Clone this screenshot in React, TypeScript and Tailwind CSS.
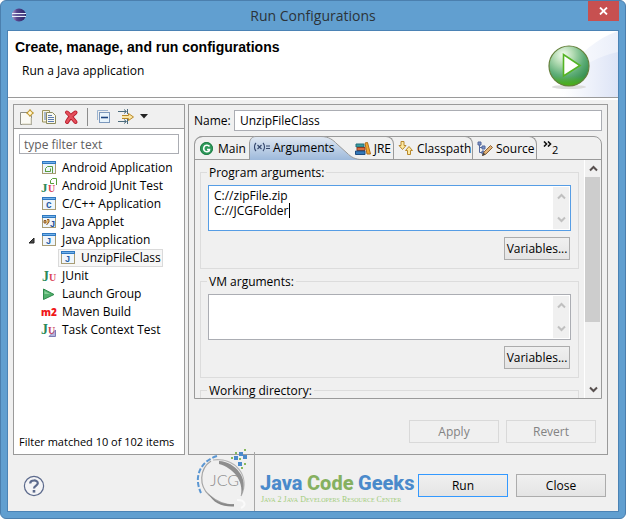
import { useState } from "react";
import type { ReactNode } from "react";

type IconName =
    | "android"
    | "androidTest"
    | "cpp"
    | "applet"
    | "java"
    | "junit"
    | "launch"
    | "maven"
    | "taskTest";

interface TreeItem {
    label: string;
    icon: IconName;
    children?: TreeItem[];
}

const treeItems: TreeItem[] = [
    { label: "Android Application", icon: "android" },
    { label: "Android JUnit Test", icon: "androidTest" },
    { label: "C/C++ Application", icon: "cpp" },
    { label: "Java Applet", icon: "applet" },
    { label: "Java Application", icon: "java", children: [{ label: "UnzipFileClass", icon: "java" }] },
    { label: "JUnit", icon: "junit" },
    { label: "Launch Group", icon: "launch" },
    { label: "Maven Build", icon: "maven" },
    { label: "Task Context Test", icon: "taskTest" },
];

const Icon = ({ children }: { children: ReactNode }) => (
    <svg width="16" height="16" viewBox="0 0 16 16" className="block shrink-0" aria-hidden="true">
        {children}
    </svg>
)

const WindowFrame = () => (
    <>
        <rect x="1.5" y="1.5" width="13" height="12" fill="#eef6fd" stroke="#a89c74" />
        <rect x="1" y="1" width="14" height="3" fill="#2f78c0" />
        <rect x="2" y="2" width="12" height="1" fill="#72b2ea" />
    </>
)

const JUnitLetters = () => (
    <>
        <text x="1" y="13" fontSize="14" fontWeight="700" fontFamily="Liberation Serif, serif" fill="#2c8a5a">J</text>
        <text x="8" y="13" fontSize="10" fontWeight="700" fontFamily="Liberation Serif, serif" fill="#dc4458">U</text>
    </>
)

const TreeIcon = ({ name }: { name: IconName }) => {
    switch (name) {
        case "android":
            return (
                <Icon>
                    <WindowFrame />
                    <path d="M4.500 12V8.500L6.500 6.500H11.500V13M4.500 11.500H9.500V8.500" fill="none" stroke="#5a9e3c" />
                </Icon>
            )
        case "androidTest":
            return (
                <Icon>
                    <text x="0" y="14" fontSize="13" fontWeight="700" fontFamily="Liberation Serif, serif" fill="#2c8a5a">J</text>
                    <text x="7" y="14" fontSize="10" fontWeight="700" fontFamily="Liberation Serif, serif" fill="#dc4458">U</text>
                    <path d="M9.500 5.500V2.500L11.500 0.500H15.500V7M9.500 5.500H13" fill="none" stroke="#5a9e3c" />
                </Icon>
            )
        case "cpp":
            return (
                <Icon>
                    <WindowFrame />
                    <text x="5" y="12" fontSize="10" fontWeight="700" fontFamily="Liberation Sans, sans-serif" fill="#2b5ea4">c</text>
                </Icon>
            )
        case "applet":
            return (
                <Icon>
                    <WindowFrame />
                    <path d="M3 6.500H5V9H3ZM6 5.500H8V8L5.500 11" fill="#e8b860" stroke="#8c5a2a" />
                    <text x="9" y="13" fontSize="9" fontWeight="700" fontFamily="Liberation Sans, sans-serif" fill="#1f4f98">J</text>
                </Icon>
            )
        case "java":
            return (
                <Icon>
                    <WindowFrame />
                    <text x="5" y="12" fontSize="9" fontWeight="700" fontFamily="Liberation Sans, sans-serif" fill="#1f5fa8">J</text>
                </Icon>
            )
        case "junit":
            return (
                <Icon>
                    <JUnitLetters />
                </Icon>
            )
        case "launch":
            return (
                <Icon>
                    <path d="M2.500 3 13 8.500 2.500 13.500Z" fill="#52b06c" stroke="#2f8a4c" />
                    <path d="M3.500 5 9 8H3.500Z" fill="#8ad09a" />
                </Icon>
            )
        case "maven":
            return (
                <Icon>
                    <text x="0" y="12" fontSize="10" fontWeight="800" fontFamily="Open Sans, sans-serif" fill="#f01818">m2</text>
                </Icon>
            )
        case "taskTest":
            return (
                <Icon>
                    <path d="M14.500 8V14.500H8Z" fill="#b4b4dc" stroke="#7c7cb4" />
                    <text x="0" y="12" fontSize="14" fontWeight="700" fontFamily="Liberation Serif, serif" fill="#2c8a5a">J</text>
                    <text x="7" y="12" fontSize="10" fontWeight="700" fontFamily="Liberation Serif, serif" fill="#c8445c">U</text>
                </Icon>
            )
    }
}

const EclipseLogo = () => (
    <svg width="16" height="16" viewBox="0 0 16 16" className="block" aria-hidden="true">
        <defs>
            <linearGradient id="eclipse" x1="0" x2="1">
                <stop offset="0" stopColor="#b79ac8" />
                <stop offset="0.35" stopColor="#54448c" />
                <stop offset="1" stopColor="#2a2466" />
            </linearGradient>
        </defs>
        <ellipse cx="8" cy="8" rx="7" ry="6.500" fill="url(#eclipse)" />
        <path d="M1 6.500H15M1 9.500H15" stroke="#e6eefa" />
        <path d="M2 8H14" stroke="#6f6ca8" />
    </svg>
)

const RunBadge = () => (
    <svg width="46" height="46" viewBox="0 0 46 46" className="block" aria-hidden="true">
        <defs>
            <radialGradient id="ball" cx="0.36" cy="0.22" r="0.8">
                <stop offset="0" stopColor="#f4fbf0" />
                <stop offset="0.3" stopColor="#b4dcb4" />
                <stop offset="0.65" stopColor="#5fae78" />
                <stop offset="1" stopColor="#2f8a4a" />
            </radialGradient>
            <linearGradient id="glow" x1="0" y1="0" x2="0" y2="1">
                <stop offset="0.75" stopColor="#5cc018" stopOpacity="0" />
                <stop offset="1" stopColor="#4cb010" />
            </linearGradient>
        </defs>
        <ellipse cx="23" cy="43" rx="17" ry="2" fill="#dcdcdc" />
        <circle cx="23" cy="22" r="20" fill="url(#ball)" />
        <circle cx="23" cy="22" r="20" fill="url(#glow)" stroke="#66803c" strokeWidth="1.2" />
        <path d="M17.500 10.500V32L34 21.500Z" fill="#fff" stroke="#54b424" strokeWidth="1.6" />
    </svg>
)

const HeaderWave = () => (
    <svg width="70" height="66" viewBox="0 0 70 66" className="absolute right-0 top-0" aria-hidden="true">
        <defs>
            <linearGradient id="wave" x1="0" x2="1">
                <stop offset="0" stopColor="#fff" />
                <stop offset="1" stopColor="#dde4f6" />
            </linearGradient>
        </defs>
        <path d="M70 0C48 8 32 22 20 40L10 66H70Z" fill="url(#wave)" opacity="0.6" />
        <path d="M70 21C50 25 36 34 22 46L14 66H70Z" fill="url(#wave)" />
    </svg>
)

const Arrow = ({ down = false, faint = false }: { down?: boolean; faint?: boolean }) => (
    <svg width="9" height="7" viewBox="0 0 9 7" className="block" aria-hidden="true">
        <path
            d={down ? "M1 1.500 4.500 5 8 1.500" : "M1 5.500 4.500 2 8 5.500"}
            fill="none"
            stroke={faint ? "#c0c0c0" : "#58504f"}
            strokeWidth="2"
        />
    </svg>
)

const Toolbar = () => (
    <div className="flex h-[24px] items-center border-b border-[#9a9a9a] bg-[#f0f0f0] pl-[5px]">
        <button type="button" aria-label="New launch configuration" className="mr-[6px]">
            <Icon>
                <path d="M1.500 3.500H10L12.500 7V15.500H1.500Z" fill="#fbfaf4" stroke="#8f8f86" />
                <path d="M3 15H12V9" fill="none" stroke="#d8d4bc" />
                <path d="M11 0.500 12.500 2.500 14.500 4 12.500 5.500 11 7.500 9.500 5.500 7.500 4 9.500 2.500Z" fill="#f6d878" stroke="#b08820" />
                <path d="M11 2.500V5.500M9.500 4H12.500" stroke="#fff" />
            </Icon>
        </button>
        <button type="button" aria-label="Duplicate" className="mr-[6px]">
            <Icon>
                <path d="M1.500 1.500H8.500V13H1.500Z" fill="#f6f4e4" stroke="#9c945c" />
                <path d="M5.500 3.500H11.500L14.500 6.500V14.500H5.500Z" fill="#f8f8f0" stroke="#8c8a5c" />
                <path d="M3 4H5M3 6H5M3 8H5M3 10H5M7 6.500H11M7 8.500H13M7 10.500H13M7 12.500H13" stroke="#5c7cb0" />
            </Icon>
        </button>
        <button type="button" aria-label="Delete" className="mr-[8px]">
            <Icon>
                <path d="M4 3.500C6 5 9 9 12.500 13M12.500 3.500C9 6 6 9 4 13" stroke="#b81c2c" strokeWidth="4" strokeLinecap="round" />
                <path d="M4 3.500C6 5 9 9 12.500 13M12.500 3.500C9 6 6 9 4 13" stroke="#e4505c" strokeWidth="2.2" strokeLinecap="round" />
            </Icon>
        </button>
        <div className="mr-[8px] h-[18px] w-px bg-[#8c8c8c]" />
        <button type="button" aria-label="Collapse all" className="mr-[6px]">
            <Icon>
                <path d="M1.500 11V1.500H12" fill="none" stroke="#9cb4d0" />
                <rect x="3.500" y="3.500" width="10" height="10" fill="#e8f4fc" stroke="#7c98bc" />
                <path d="M5 8.500H12" stroke="#1c4480" strokeWidth="1.600" />
            </Icon>
        </button>
        <button type="button" aria-label="Filter launch configurations" className="flex items-center gap-[6px]">
            <Icon>
                <path d="M0 2.500H8M0 12.500H8" stroke="#4c6c7c" />
                <path d="M6 0.500 8.500 2.500 6 4.500M6 10.500 8.500 12.500 6 14.500M9.500 0V5M9.500 10V15" fill="none" stroke="#4c6c7c" />
                <path d="M4 6.500H10.500V4.500L15.500 8 10.500 11.500V9.500H4" fill="#fbe7a4" stroke="#b88828" />
            </Icon>
            <svg width="8" height="5" viewBox="0 0 8 5" aria-hidden="true">
                <path d="M0 0H8L4 4.500Z" fill="#222" />
            </svg>
        </button>
    </div>
)

const Tree = () => (
    <ul role="tree" className="mt-[5px] flex-1">
        {treeItems.map(item => (
            <li key={item.label} role="treeitem" aria-expanded={item.children ? true : undefined}>
                <div className="flex h-[18px] items-center pl-[14px]">
                    <span className="flex w-[13px] shrink-0">
                        {item.children && (
                            <svg width="7" height="7" viewBox="0 0 7 7" aria-hidden="true">
                                <path d="M6 1V6H1Z" fill="#484848" stroke="#222" />
                            </svg>
                        )}
                    </span>
                    <TreeIcon name={item.icon} />
                    <span className="ml-[5px] whitespace-nowrap">{item.label}</span>
                </div>
                {item.children && (
                    <ul role="group">
                        {item.children.map(child => (
                            <li key={child.label} role="treeitem" aria-selected="true" className="flex pl-[44px]">
                                <div className="flex h-[18px] items-center border border-[#dadada] bg-[#f7f7f7] px-px">
                                    <TreeIcon name={child.icon} />
                                    <span className="ml-[5px] whitespace-nowrap">{child.label}</span>
                                </div>
                            </li>
                        ))}
                    </ul>
                )}
            </li>
        ))}
    </ul>
)

const ConfigurationList = () => {
    const [filter, setFilter] = useState("")

    return (
        <section className="flex w-[172px] shrink-0 flex-col border border-[#9a9a9a] bg-white">
            <Toolbar />
            <input
                type="text"
                aria-label="Filter"
                placeholder="type filter text"
                value={filter}
                onChange={e => setFilter(e.target.value)}
                className="mx-[5px] mt-[5px] h-[20px] border border-[#abadb3] px-[4px] outline-none placeholder:text-[#606060]"
            />
            <Tree />
            <p className="whitespace-nowrap pb-[4px] pl-[5px] text-[11px]">Filter matched 10 of 102 items</p>
        </section>
    )
}

const pushButton = "h-[23px] border text-center leading-[20px] whitespace-nowrap"
const enabledButton = "border-[#acacac] bg-linear-to-b from-[#f0f0f0] to-[#e4e4e4]"

const ArgumentsGroup = ({ label, value, focused = false }: { label: string; value: string; focused?: boolean }) => {
    const [text, setText] = useState(value)

    return (
        <fieldset className="h-[105px] shrink-0 border border-[#dcdcdc] px-[7px] pt-[4px]">
            <legend className="ml-[-1px] px-[2px] pt-px leading-[16px]">{label}</legend>
            <div className={`relative flex h-[46px] border bg-white p-px ${focused ? "border-[#569de5]" : "border-[#abadb3]"}`}>
                <textarea
                    aria-label={label}
                    value={text}
                    onChange={e => setText(e.target.value)}
                    className="flex-1 resize-none overflow-hidden pl-[4px] pt-px leading-[15px] outline-none"
                />
                {focused && <span className="absolute left-[80px] top-[17px] h-[15px] w-px bg-black" />}
                <div className="flex w-[16px] flex-col items-center justify-between bg-[#f0f0f0] py-[6px]">
                    <Arrow faint />
                    <Arrow faint down />
                </div>
            </div>
            <div className="mt-[6px] flex justify-end pr-px">
                <button type="button" className={`${pushButton} ${enabledButton} w-[66px]`}>Variables...</button>
            </div>
        </fieldset>
    )
}

const tabBase = "relative -mt-px flex h-[24px] shrink-0 items-center gap-[3px] border-t border-[#9a9a9a] whitespace-nowrap"
const plainTab = "rounded-tr-lg border-r"

const TabStrip = () => (
    <div role="tablist" className="flex h-[23px] border-b border-[#9a9a9a]">
        <button type="button" role="tab" className={`${tabBase} w-[54px] rounded-tl-lg pl-[4px]`}>
            <Icon>
                <circle cx="7.500" cy="7.500" r="6.500" fill="#2f9a5c" />
                <circle cx="7.500" cy="7.500" r="6" fill="none" stroke="#1f7c44" />
                <path d="M10.500 5.500C9.500 3.800 6 3.800 5 6C4 8.500 5.500 11 8 10.800C9.500 10.700 10.500 9.500 10.500 8.500H8" fill="none" stroke="#fff" strokeWidth="1.600" />
            </Icon>
            Main
        </button>
        <button type="button" role="tab" aria-selected="true" className="relative z-10 -mt-px flex h-[24px] w-[105px] shrink-0 items-center gap-px pl-[5px] whitespace-nowrap">
            <svg width="116" height="24" viewBox="0 0 116 24" className="absolute left-0 top-0" aria-hidden="true">
                <defs>
                    <linearGradient id="activeTab" x1="0" y1="0" x2="0" y2="1">
                        <stop offset="0" stopColor="#e0e8f2" />
                        <stop offset="1" stopColor="#9db9db" />
                    </linearGradient>
                </defs>
                <path d="M0.500 24V7C1 3 3 0.500 7 0.500H72C80 0.500 84 4 88 8L98 17C102 21 106 23.500 113 23.500V24Z" fill="url(#activeTab)" />
                <path d="M0.500 24V7C1 3 3 0.500 7 0.500H72C80 0.500 84 4 88 8L98 17C102 21 106 23.500 113 23.500" fill="none" stroke="#9a9a9a" />
            </svg>
            <svg width="18" height="16" viewBox="0 0 18 16" className="relative" aria-hidden="true">
                <path d="M2 3C0 5 0 9 2 11M9 3C11 5 11 9 9 11M3.500 5 7.500 9M7.500 5 3.500 9M12 6H16M12 8.500H16" fill="none" stroke="#34466c" strokeWidth="1.100" />
            </svg>
            <span className="relative">Arguments</span>
        </button>
        <button type="button" role="tab" className={`${tabBase} ${plainTab} w-[40px] justify-end pr-[2px]`}>
            <Icon>
                <path d="M1 3H9V6H1Z" fill="#3c9c9c" stroke="#1f6c7c" />
                <path d="M2 6.500H10V9.500H2Z" fill="#d86c3c" stroke="#8c3c24" />
                <path d="M0.500 10H10V13.500H0.500Z" fill="#3478b8" stroke="#1f4c80" />
                <path d="M10 2 12.500 1.500 15.500 13H12Z" fill="#f0a830" stroke="#b06c18" />
            </Icon>
            JRE
        </button>
        <button type="button" role="tab" className={`${tabBase} ${plainTab} w-[79px] pl-[4px]`}>
            <Icon>
                <path d="M3 0.500H6V4.500H8L4.500 8.500 1 4.500H3Z" fill="#fde9a0" stroke="#b8882c" />
                <path d="M9.500 13.500V9.500H7.500L11 5.500 14.500 9.500H12.500V13.500Z" fill="#fde9a0" stroke="#b8882c" />
            </Icon>
            Classpath
        </button>
        <button type="button" role="tab" className={`${tabBase} ${plainTab} w-[64px] pl-[4px]`}>
            <Icon>
                <path d="M2.500 3V11.500H5M2.500 6.500H5" fill="none" stroke="#54689c" />
                <path d="M1 1H4V4H1ZM5 5H8V8H5ZM5 10H7V13H5Z" fill="#7c94c8" stroke="#54689c" />
                <path d="M5.500 14.500 7 11 13.500 4.500 15.500 6.500 9 13Z" fill="#e4b478" stroke="#8c6438" />
                <path d="M5 15 6.500 11.500 8.500 13.500Z" fill="#444" />
            </Icon>
            Source
        </button>
        <button type="button" aria-label="Show more tabs" className="flex h-[22px] items-start pl-[6px] pt-[4px]">
            <svg width="9" height="6" viewBox="0 0 9 6" aria-hidden="true">
                <path d="M1 0.500 3.500 3 1 5.500M5 0.500 7.500 3 5 5.500" fill="none" stroke="#111" strokeWidth="1.600" />
            </svg>
            <span className="text-[11px] leading-[18px]">2</span>
        </button>
    </div>
)

const ConfigurationEditor = () => {
    const [name, setName] = useState("UnzipFileClass")

    return (
        <section className="flex min-w-0 flex-1 flex-col border border-[#9a9a9a] p-[5px]">
            <div className="flex items-center">
                <label htmlFor="config-name" className="w-[40px]">Name:</label>
                <input
                    id="config-name"
                    type="text"
                    value={name}
                    onChange={e => setName(e.target.value)}
                    className="h-[21px] min-w-0 flex-1 border border-[#abadb3] bg-white px-[5px] outline-none"
                />
            </div>
            <div className="mt-[5px] flex min-h-0 flex-1 flex-col rounded-t-lg border border-[#9a9a9a]">
                <TabStrip />
                <div className="flex min-h-0 flex-1">
                    <div className="flex min-w-0 flex-1 flex-col gap-[4px] overflow-hidden px-[5px] pt-[4px]">
                        <ArgumentsGroup label="Program arguments:" value={"C://zipFile.zip\nC://JCGFolder"} focused />
                        <ArgumentsGroup label="VM arguments:" value="" />
                        <fieldset className="h-[105px] shrink-0 border border-[#dcdcdc] px-[7px]">
                            <legend className="ml-[-1px] px-[2px] pt-px leading-[16px]">Working directory:</legend>
                        </fieldset>
                    </div>
                    <div className="flex w-[17px] flex-col border-l border-white bg-[#f0f0f0]">
                        <div className="flex h-[17px] shrink-0 items-center justify-center"><Arrow /></div>
                        <div className="h-[145px] w-[15px] bg-[#cdcdcd]" />
                        <div className="mt-auto flex h-[17px] shrink-0 items-center justify-center"><Arrow down /></div>
                    </div>
                </div>
            </div>
            <div className="mb-[6px] mt-[21px] flex justify-end gap-[7px] pr-[6px]">
                <button type="button" disabled className={`${pushButton} w-[90px] border-[#d9d9d9] text-[#838383]`}>Apply</button>
                <button type="button" disabled className={`${pushButton} w-[90px] border-[#d9d9d9] text-[#838383]`}>Revert</button>
            </div>
        </section>
    )
}

const Watermark = () => (
    <svg width="226" height="68" viewBox="0 0 226 68" className="absolute -top-[11px] left-[183px]" role="img" aria-label="Java Code Geeks">
        <g fill="none">
            <path d="M20 17C8 25 8 42 18 51C26 58 34 61 43 61" stroke="#a4a4a4" strokeWidth="1.200" />
            <path d="M17 49C24 58 33 61 43 60V62.500C31 63 22 59 17 49Z" fill="#888" />
            <path d="M22 16C44 13 60 32 50 52" stroke="#b4b4b4" strokeWidth="1.200" />
            <path d="M28 17C44 18 59 34 50 52C53 36 42 24 28 20Z" fill="#8e8e8e" />
            <path d="M26 12C10 17 2 32 10 49" stroke="#5a96d2" strokeWidth="2" strokeDasharray="5 2" />
            <path d="M46 56C54 56 56 61 50 64" stroke="#fafafa" strokeWidth="2" />
        </g>
        <text x="19" y="42" fontSize="16" fontFamily="Lato, sans-serif" fontWeight="300" fill="#8c8c8c">JCG</text>
        <g fill="#4a8acb">
            <rect x="48" y="8" width="4" height="4" /><rect x="43" y="12" width="4" height="4" />
            <rect x="52" y="11" width="4" height="4" /><rect x="47" y="18" width="4" height="4" />
        </g>
        <g fill="#86b85c">
            <rect x="53" y="5" width="2" height="2" /><rect x="44" y="8" width="2" height="2" />
            <rect x="40" y="13" width="2" height="2" /><rect x="48" y="14" width="2" height="2" />
            <rect x="53" y="19" width="2" height="2" /><rect x="50" y="23" width="2" height="2" />
        </g>
        <path d="M63.500 8V67" stroke="#a8a8a8" />
        <g fontSize="20" fontWeight="800" fontFamily="Roboto, sans-serif">
            <text x="69" y="46" fill="#4a8acb">Java</text>
            <text x="116" y="46" fill="#86b060">Code</text>
            <text x="167" y="46" fill="#4a8acb">Geeks</text>
        </g>
        <text x="70" y="58" fontSize="8" fontFamily="Liberation Serif, serif" fill="#a3cd7b" style={{ fontVariant: "small-caps" }}>
            Java 2 Java Developers Resource Center
        </text>
    </svg>
)

const Footer = () => (
    <footer className="relative flex items-center pb-[14px] pl-[15px] pr-[12px] pt-[19px]">
        <button type="button" aria-label="Help">
            <svg width="22" height="22" viewBox="0 0 22 22" className="block" aria-hidden="true">
                <circle cx="11" cy="11" r="9.600" fill="#f4f4f6" stroke="#5c6a8c" strokeWidth="1.200" />
                <path d="M7.200 8.500C7.200 4.500 14.800 4.500 14.800 8.300C14.800 10.500 11 10.700 11 13.500" fill="none" stroke="#5c6a8c" strokeWidth="2.200" />
                <rect x="9.700" y="15" width="2.600" height="2.600" fill="#5c6a8c" />
            </svg>
        </button>
        <Watermark />
        <div className="relative ml-auto flex gap-[8px]">
            <button type="button" className={`${pushButton} w-[90px] border-[#3399ff] bg-linear-to-b from-[#f0f0f0] to-[#e4e4e4]`}>Run</button>
            <button type="button" className={`${pushButton} ${enabledButton} w-[90px]`}>Close</button>
        </div>
    </footer>
)

const App = () => (
    <div className="flex h-screen flex-col rounded-md border border-[#4b7fae] bg-[#619fd0] px-[6px] pb-[6px] font-['Open_Sans','Noto_Sans',sans-serif] text-[12px] leading-[16px] text-black">
        <header className="relative flex h-[29px] shrink-0 items-center justify-center">
            <span className="absolute left-[4px] top-[6px]"><EclipseLogo /></span>
            <h1 className="text-[14px] leading-[20px] text-[#2c3338]">Run Configurations</h1>
            <button type="button" aria-label="Close window" className="absolute right-0 top-0 flex h-[20px] w-[31px] items-center justify-center bg-[#c75050]">
                <svg width="9" height="8" viewBox="0 0 9 8" aria-hidden="true">
                    <path d="M1 0.500 8 7.500M8 0.500 1 7.500" stroke="#fff" strokeWidth="1.800" />
                </svg>
            </button>
        </header>
        <main className="flex min-h-0 flex-1 flex-col border border-[#4b83b5] bg-[#f0f0f0]">
            <div className="relative flex h-[67px] shrink-0 justify-between border-b border-[#9a9a9a] bg-white">
                <HeaderWave />
                <div className="pl-[7px] pt-[8px]">
                    <h2 className="font-['Liberation_Sans',sans-serif] text-[14px] font-bold leading-[17px]">Create, manage, and run configurations</h2>
                    <p className="mt-[7px] pl-[7px]">Run a Java application</p>
                </div>
                <div className="relative mr-[26px] mt-[13px]"><RunBadge /></div>
            </div>
            <div className="flex min-h-0 flex-1 gap-[3px] border-t-2 border-white pl-[5px] pr-[10px] pt-[4px]">
                <ConfigurationList />
                <ConfigurationEditor />
            </div>
            <Footer />
        </main>
    </div>
)

export default App;
